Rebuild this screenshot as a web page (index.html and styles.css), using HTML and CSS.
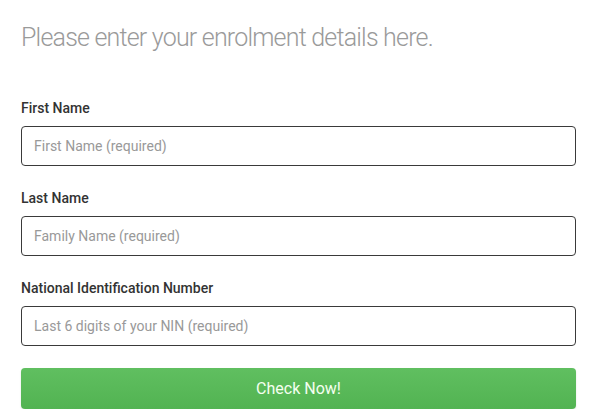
FILE: index.html
```html
<!DOCTYPE html>
<html lang="en">
<head>
    <meta charset="UTF-8">
    <meta name="viewport" content="width=device-width, initial-scale=1.0">
    <title>Enrolment</title>
    <link rel="stylesheet" href="styles.css">
</head>
<body>
    <div class="container">
        <h1>Please enter your enrolment details here.</h1>
        <form id="enrolForm">
            <div class="field">
                <label for="firstName">First Name</label>
                <input type="text" id="firstName" placeholder="First Name (required)" required>
            </div>
            <div class="field">
                <label for="lastName">Last Name</label>
                <input type="text" id="lastName" placeholder="Family Name (required)" required>
            </div>
            <div class="field">
                <label for="nin">National Identification Number</label>
                <input type="text" id="nin" placeholder="Last 6 digits of your NIN (required)" required>
            </div>
            <button type="submit">Check Now!</button>
        </form>
    </div>
</body>
</html>
```

FILE: styles.css
```css
body {
    font-family: Roboto, "Liberation Sans", sans-serif;
    background-color: #ffffff;
    margin: 0;
    padding: 0;
}

.container {
    padding: 23px 36px 0 21px;
}

h1 {
    font-size: 25px;
    font-weight: 300;
    letter-spacing: -0.8px;
    color: #9a9a9a;
    margin: 0 0 45px 0;
    line-height: 30px;
}

.field {
    margin-bottom: 22px;
}

label {
    display: block;
    font-size: 14px;
    font-weight: 500;
    color: #333;
    line-height: 20px;
    margin-bottom: 8px;
}

input[type="text"] {
    display: block;
    box-sizing: border-box;
    width: 100%;
    height: 40px;
    padding: 0 12px;
    font-family: inherit;
    font-size: 14px;
    color: #333;
    border: 1px solid #3a3a3a;
    border-radius: 4px;
    outline: none;
}

input::placeholder {
    color: #999;
}

button {
    display: block;
    width: 100%;
    height: 41px;
    margin-top: 22px;
    font-family: inherit;
    font-size: 16px;
    color: #f4fff0;
    background: linear-gradient(#60bf60, #52b352);
    border: none;
    border-radius: 4px;
    box-shadow: 0 1px 2px rgba(0, 0, 0, 0.12);
    cursor: pointer;
}

    button:hover {
        background: #4cae4c;
    }
```
